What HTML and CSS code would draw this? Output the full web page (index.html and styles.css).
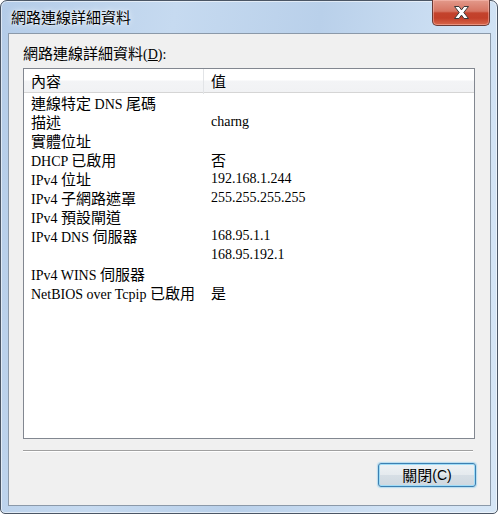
FILE: index.html
```html
<!DOCTYPE html>
<html lang="zh-Hant">
<head>
<meta charset="utf-8">
<title>網路連線詳細資料</title>
<link rel="stylesheet" href="styles.css">
</head>
<body>
<div class="window">
  <div class="titlebar">
    <span class="title">網路連線詳細資料</span>
    <div class="close">
      <svg width="17" height="15" viewBox="0 0 17 15">
        <path d="M1.5 1.5 H6 L8.5 4.9 L11 1.5 H15.5 L10.8 7.5 L15.5 13.5 H11 L8.5 10.1 L6 13.5 H1.5 L6.2 7.5 Z" fill="#ffffff" stroke="#3a3a3a" stroke-width="1" stroke-linejoin="round"/>
      </svg>
    </div>
  </div>
  <div class="client">
    <div class="label"><span class="c">網路連線詳細資料</span>(<u>D</u>):</div>
    <div class="list">
      <div class="head">
        <div class="hcell first"><span class="c">內容</span></div>
        <div class="hcell"><span class="c">值</span></div>
      </div>
      <div class="rows">
        <div class="row"><div class="cell"><span class="c">連線特定</span> DNS <span class="c">尾碼</span></div><div class="cell val"></div></div>
        <div class="row"><div class="cell"><span class="c">描述</span></div><div class="cell val">charng</div></div>
        <div class="row"><div class="cell"><span class="c">實體位址</span></div><div class="cell val"></div></div>
        <div class="row"><div class="cell">DHCP <span class="c">已啟用</span></div><div class="cell val"><span class="c">否</span></div></div>
        <div class="row"><div class="cell">IPv4 <span class="c">位址</span></div><div class="cell val">192.168.1.244</div></div>
        <div class="row"><div class="cell">IPv4 <span class="c">子網路遮罩</span></div><div class="cell val">255.255.255.255</div></div>
        <div class="row"><div class="cell">IPv4 <span class="c">預設閘道</span></div><div class="cell val"></div></div>
        <div class="row"><div class="cell">IPv4 DNS <span class="c">伺服器</span></div><div class="cell val">168.95.1.1</div></div>
        <div class="row"><div class="cell"></div><div class="cell val">168.95.192.1</div></div>
        <div class="row"><div class="cell">IPv4 WINS <span class="c">伺服器</span></div><div class="cell val"></div></div>
        <div class="row"><div class="cell">NetBIOS over Tcpip <span class="c">已啟用</span></div><div class="cell val"><span class="c">是</span></div></div>
      </div>
    </div>
    <div class="sep"></div>
    <div class="actions">
      <button class="btn" type="button"><span class="c">關閉</span><span class="acc">(C)</span></button>
    </div>
  </div>
</div>
</body>
</html>
```
FILE: styles.css
```css
* { box-sizing: border-box; }
html, body { margin: 0; padding: 0; }
body {
  width: 498px;
  height: 514px;
  overflow: hidden;
  background: #ffffff;
  font-family: "Liberation Serif", "Noto Sans CJK TC", serif;
  font-size: 14px;
  color: #000;
}
.c {
  font-family: "Noto Sans CJK TC", sans-serif;
  font-size: 15px;
}
.window {
  width: 498px;
  height: 514px;
  border: 1px solid #4b5665;
  border-radius: 7px 7px 5px 5px;
  background: linear-gradient(100deg, #b4cce8 0%, #c6daf0 30%, #b9d0ea 55%, #cfe1f4 80%, #d6e6f6 100%);
  box-shadow: inset 0 0 0 1px rgba(255, 255, 255, 0.55);
  display: flex;
  flex-direction: column;
}
.titlebar {
  height: 32px;
  display: flex;
  justify-content: space-between;
  align-items: flex-start;
  padding: 0 7px 0 10px;
}
.title {
  font-family: "Noto Sans CJK TC", sans-serif;
  font-size: 15px;
  line-height: 20px;
  margin-top: 6px;
  color: #000;
  text-shadow: 0 0 6px rgba(255, 255, 255, 0.95), 0 0 2px rgba(255, 255, 255, 0.9);
}
.close {
  width: 58px;
  height: 26px;
  margin-top: -1px;
  border: 1px solid #6a3a35;
  border-top: none;
  border-radius: 0 0 5px 5px;
  background: linear-gradient(#e39a8b 0%, #d67462 45%, #c3432d 52%, #c23f29 72%, #d8664a 100%);
  box-shadow: inset 0 0 0 1px rgba(255, 200, 190, 0.45);
  display: flex;
  align-items: center;
  justify-content: center;
}
.close svg { display: block; margin-top: -1px; }
.client {
  flex: 1;
  margin: 0 6px 7px 7px;
  border: 1px solid #8b99a9;
  background: #f0f0f0;
  display: flex;
  flex-direction: column;
  padding: 9px 15px 0 14px;
}
.label {
  height: 20px;
  line-height: 20px;
  white-space: nowrap;
}
.label u { text-underline-offset: 1px; }
.list {
  margin-top: 5px;
  height: 371px;
  border: 1px solid #828790;
  background: #ffffff;
}
.head {
  height: 24px;
  display: grid;
  grid-template-columns: 180px 1fr;
  border-bottom: 1px solid #d5d5d5;
  background: linear-gradient(#ffffff 0%, #ffffff 48%, #f3f4f6 52%, #f1f2f4 100%);
}
.hcell {
  padding-left: 7px;
  line-height: 23px;
  white-space: nowrap;
}
.hcell.first { border-right: 1px solid #e2e4e7; }
.row {
  display: grid;
  grid-template-columns: 180px 1fr;
  height: 19px;
  line-height: 19px;
}
.cell {
  padding-left: 7px;
  white-space: nowrap;
  overflow: visible;
}
.sep {
  height: 1px;
  background: #a0a0a0;
  margin: 11px 2px 0 0;
  box-shadow: 0 1px 0 #ffffff;
}
.actions {
  display: flex;
  justify-content: flex-end;
  margin-top: 12px;
  margin-right: -1px;
}
.btn {
  width: 98px;
  height: 24px;
  padding: 0;
  margin: 0;
  border: 1px solid #3c7fb1;
  border-radius: 3px;
  background: linear-gradient(#eef2f5 0%, #e5eaee 48%, #d6dee5 52%, #cfd8e0 100%);
  box-shadow: inset 0 0 0 1px #9fdcf7, 0 0 1px 1px rgba(120, 200, 240, 0.5);
  color: #000;
  font-family: "Liberation Serif", "Noto Sans CJK TC", serif;
  font-size: 14px;
  line-height: 20px;
  display: flex;
  align-items: center;
  justify-content: center;
}
.acc {
  font-family: "Liberation Sans", sans-serif;
  font-size: 14px;
}
```
